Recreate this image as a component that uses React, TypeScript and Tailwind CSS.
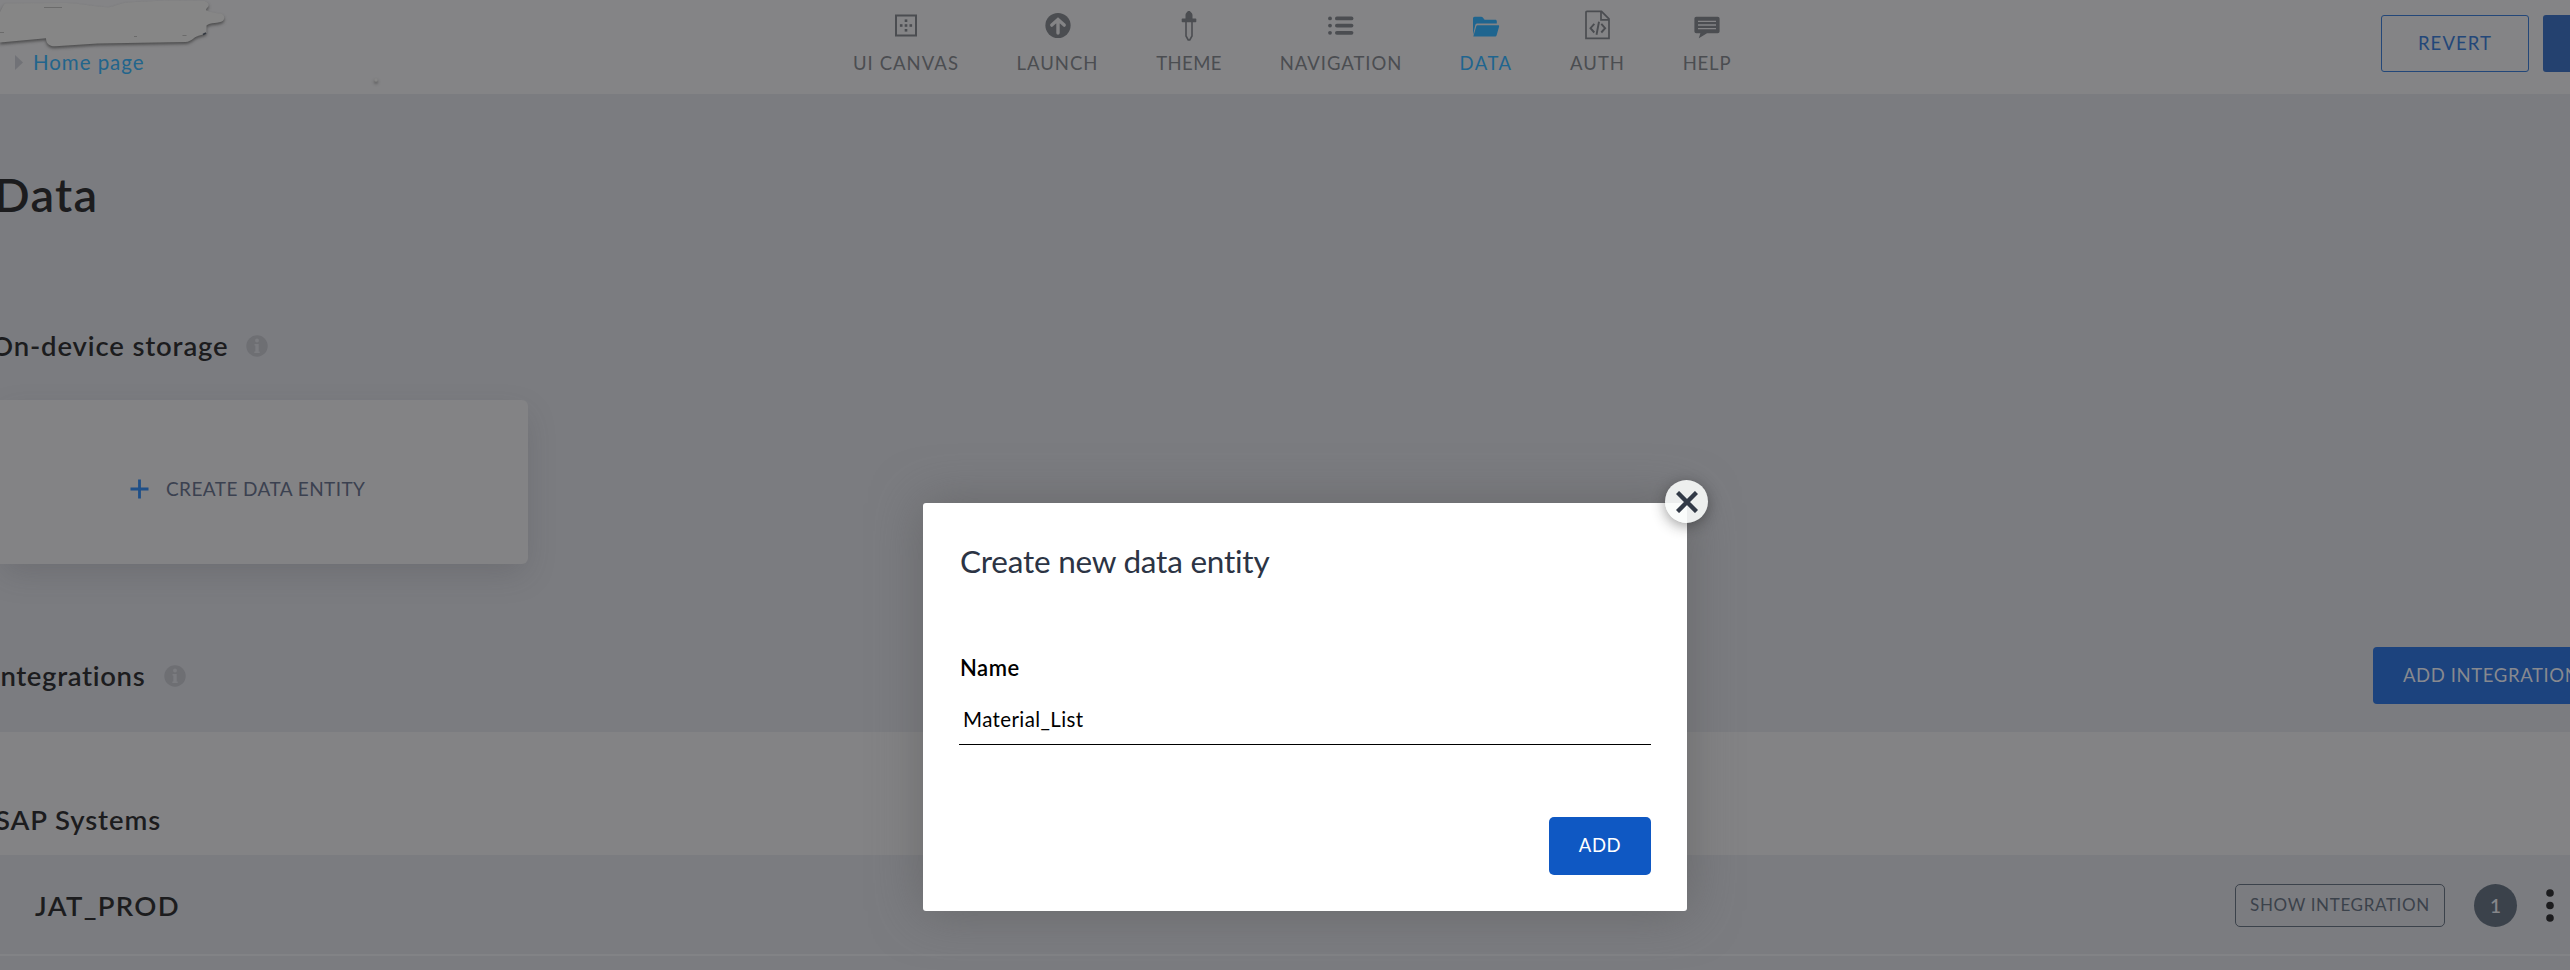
import React from "react";

type NavItem = { label: string; width: string; color: string; track: string; icon: React.ReactNode };

const gray = "text-[#4b4d51]";

const CanvasIcon = () => (
  <svg width="24" height="32" viewBox="0 0 24 32" fill="none">
    <rect x="2" y="6.500" width="20" height="20" stroke="currentColor" strokeWidth="2" />
    <g fill="currentColor">
      <rect x="10.700" y="10.400" width="2.600" height="2.600" />
      <rect x="10.700" y="15.200" width="2.600" height="2.600" />
      <rect x="10.700" y="20" width="2.600" height="2.600" />
      <rect x="5.900" y="15.200" width="2.600" height="2.600" />
      <rect x="15.500" y="15.200" width="2.600" height="2.600" />
    </g>
  </svg>
);

const LaunchIcon = () => (
  <svg width="28" height="32" viewBox="0 0 28 32" fill="none">
    <circle cx="14" cy="16.500" r="12.600" fill="currentColor" />
    <path d="M14 24V12M7.800 16.100L14 10.500l6.200 5.600" stroke="#848486" strokeWidth="3.400" strokeLinecap="round" />
  </svg>
);

const ThemeIcon = () => (
  <svg width="16" height="32" viewBox="0 0 16 32" fill="none">
    <path d="M4.500 10V6c0-2 1.600-2.600 2.400-4h2c.8 1.400 2.600 2 2.600 4v4z" fill="currentColor" />
    <rect x="0.700" y="9.600" width="14.600" height="3.600" rx="0.800" fill="currentColor" />
    <path d="M5 13v14l2.200 4h1.600L11 27V13" stroke="currentColor" strokeWidth="1.600" />
  </svg>
);

const NavigationIcon = () => (
  <svg width="28" height="32" viewBox="0 0 28 32" fill="currentColor">
    {[9.4, 16.6, 23.8].map((y) => (
      <g key={y}>
        <circle cx="3" cy={y} r="1.900" />
        <rect x="8" y={y - 1.9} width="18.400" height="3.800" rx="1.900" />
      </g>
    ))}
  </svg>
);

const FolderIcon = () => (
  <svg width="28" height="32" viewBox="0 0 28 32" fill="currentColor">
    <path d="M1 26V9.500C1 8.400 1.700 7.700 2.800 7.700h6.400c.6 0 1 .2 1.400.6l2 2.400h10.600c1 0 1.600.6 1.600 1.500v2.300H5.400c-1.100 0-1.800.5-2.100 1.500z" />
    <path d="M5.600 16.300h20.500c.8 0 1.200.5 1 1.200l-2.400 8.400c-.3 1-.9 1.500-1.900 1.500H1.300l3-10.100c.2-.7.600-1 1.300-1z" />
  </svg>
);

const AuthIcon = () => (
  <svg width="28" height="32" viewBox="0 0 28 32" fill="none" stroke="currentColor" strokeWidth="1.700">
    <path d="M3 2.300h14.500l7.500 7.500v19.500H2V3.300c0-.6.4-1 1-1z" />
    <path d="M17 2.800v8h8" />
    <path d="M10.300 14.900L6.500 19.200l3.800 4.300M17.300 14.900l3.800 4.300-3.800 4.300M15 12.700l-2.500 13" strokeWidth="1.900" />
  </svg>
);

const HelpIcon = () => (
  <svg width="28" height="32" viewBox="0 0 28 32" fill="none">
    <path d="M3.400 7.700h21.200c1.200 0 2 .8 2 2v12.500c0 1.200-.8 2-2 2H14l-8.200 5 1.600-5h-4c-1.200 0-2-.8-2-2V9.700c0-1.200.8-2 2-2z" fill="currentColor" />
    <path d="M5 12.300h18M5 16h18M5 19.700h18" stroke="#848486" strokeWidth="1.300" />
  </svg>
);

const items: NavItem[] = [
  { label: "UI CANVAS", width: "w-[164px]", color: gray, track: "tracking-[1.050px]", icon: <CanvasIcon /> },
  { label: "LAUNCH", width: "w-[139px]", color: gray, track: "tracking-[1px]", icon: <LaunchIcon /> },
  { label: "THEME", width: "w-[124px]", color: gray, track: "tracking-[0.400px]", icon: <ThemeIcon /> },
  { label: "NAVIGATION", width: "w-[180px]", color: gray, track: "tracking-[0.950px]", icon: <NavigationIcon /> },
  { label: "DATA", width: "w-[110px]", color: "text-[#1f658f]", track: "tracking-[1.500px]", icon: <FolderIcon /> },
  { label: "AUTH", width: "w-[113px]", color: gray, track: "tracking-[1px]", icon: <AuthIcon /> },
  { label: "HELP", width: "w-[106px]", color: gray, track: "tracking-[0.800px]", icon: <HelpIcon /> },
];

const InfoIcon = () => (
  <svg width="22" height="22" viewBox="0 0 22 22" className="shrink-0">
    <circle cx="11" cy="11" r="10.700" fill="#6e6f73" />
    <g fill="#7b7c80">
      <circle cx="11" cy="5.400" r="2" />
      <path d="M8.500 9h4.200v7.500h1V18H8.300v-1.500h1v-6h-.8z" />
    </g>
  </svg>
);

const Scribble = () => (
  <svg width="400" height="90" viewBox="0 0 400 90" className="absolute left-0 top-0">
    <g fill="#868686" className="drop-shadow-[0_2px_1.500px_rgba(40,40,40,0.6)]">
      <path d="M0 12C3 7 3 3.500 7 3.200L66 3c14 .5 31 4 42 4.300 7-.8 9-3 18-4.800L165 .5l38 .3c5 .6 7 4 5 6-1 1.500-2 2-2 3.500 4 2 10 3 15 3.400 4 1 4 5 2 7-4 3-13 1.500-16.500 4.800V33c-3 2-9 2-13 5.500-2 1.500-5 3.500-8 3.500l-88 1.500-42 2.700c-6 .3-9.500-2.500-9.500-8L0 42.500z" />
      <circle cx="376" cy="80" r="1.700" />
    </g>
    <path d="M44 7.500h18M182.500 35.500h4M134 36.500h3M0 32.500h4" stroke="#6b6b6b" strokeWidth="1" />
    <path d="M203 34.500l3-1.500" stroke="#333840" strokeWidth="1.500" />
  </svg>
);

export default function App() {
  return (
    <div className="relative flex h-[970px] w-[2570px] flex-col overflow-hidden bg-[#7b7c80] font-['Lato',sans-serif] leading-none whitespace-nowrap">
      <header className="relative flex h-[94px] shrink-0 items-start bg-[#848486]">
        <div className="w-[824px] shrink-0">
          <Scribble />
          <div className="flex items-center pl-[15px] pt-[50px]">
            <svg width="8" height="15" viewBox="0 0 8 15"><path d="M0 0l8 7.500L0 15z" fill="#717277" /></svg>
            <span className="ml-[10px] text-[20.500px] leading-6 tracking-[0.950px] text-[#22658c]">Home page</span>
          </div>
        </div>
        <nav className="flex">
          {items.map((it) => (
            <div key={it.label} className={`flex flex-col items-center pt-[9px] ${it.width} ${it.color}`}>
              {it.icon}
              <span className={`mt-[11px] text-[18.500px] leading-[22px] ${it.track}`}>{it.label}</span>
            </div>
          ))}
        </nav>
        <div className="ml-auto flex gap-[14px] pt-[15px]">
          <button className="h-[57px] w-[148px] rounded-[3px] border border-[#234779] pb-px text-[18.500px] tracking-[1.100px] text-[#234779]">REVERT</button>
          <div className="h-[57px] w-[27px] rounded-l-[3px] bg-[#24416f]" />
        </div>
      </header>

      <section className="flex h-[638px] shrink-0 flex-col">
        <h1 className="-ml-[6px] mt-[70px] text-[47px] font-semibold leading-[60px] tracking-[1.300px] text-[#1c1c1e]">Data</h1>
        <div className="mt-[105px] flex h-[34px] items-center">
          <h2 className="-ml-[9px] w-[255px] text-[27.500px] font-semibold tracking-[0.850px] text-[#1c1c1e]">On-device storage</h2>
          <InfoIcon />
        </div>
        <div className="mt-[37px] flex h-[164px] w-[528px] shrink-0 items-center rounded-r-[6px] bg-[#838385] pl-[130px] pt-[13px] shadow-[0_12px_32px_-4px_rgba(60,60,64,0.22)]">
          <svg width="19" height="20" viewBox="0 0 19 20"><path d="M9.500 .5v19M.5 10h18" stroke="#1e4f88" strokeWidth="2.800" /></svg>
          <span className="ml-[17px] text-[19px] tracking-[0.420px] text-[#3b4150]">CREATE DATA ENTITY</span>
        </div>
        <div className="mt-[83px] flex h-[57px] items-center">
          <h2 className="-ml-[8px] w-[172px] text-[27.500px] font-semibold tracking-[0.650px] text-[#1c1c1e]">Integrations</h2>
          <InfoIcon />
          <button className="ml-auto flex h-[57px] w-[197px] items-center overflow-hidden rounded-l-[4px] bg-[#1c437e] pb-px pl-[30px] text-[18.500px] tracking-[0.600px] text-[#87898f]">ADD INTEGRATION</button>
        </div>
      </section>

      <section className="h-[123px] shrink-0 bg-[#838385] pt-[71px]">
        <h2 className="-ml-[5px] text-[27.500px] font-semibold leading-[33px] tracking-[0.900px] text-[#1c1c1e]">SAP Systems</h2>
      </section>

      <section className="flex h-[101px] shrink-0 items-center border-b-2 border-[#828386] pl-[35px] pt-[2px]">
        <h3 className="text-[27.500px] font-semibold tracking-[1.300px] text-[#1c1c1e]">JAT_PROD</h3>
        <button className="ml-auto flex h-[43px] w-[210px] items-center justify-center rounded-[5px] border border-[#3b424b] pb-[3px] text-[17px] tracking-[0.650px] text-[#3b424b]">SHOW INTEGRATION</button>
        <div className="ml-[29px] flex size-[43px] items-center justify-center rounded-full bg-[#3b424b] text-[19px] font-semibold text-[#85868a]">1</div>
        <svg width="8" height="33" viewBox="0 0 8 33" className="ml-[29px] mr-[16px]" fill="#1c1c1e">
          <circle cx="4" cy="4" r="3.800" /><circle cx="4" cy="16.500" r="3.800" /><circle cx="4" cy="29" r="3.800" />
        </svg>
      </section>

      <div role="dialog" className="absolute left-[923px] top-[503px] flex h-[408px] w-[764px] flex-col rounded-[3px] bg-white px-[36px] pb-[36px] shadow-[0_0_50px_rgba(90,90,90,0.6)]">
        <h2 className="mt-[39px] pl-px text-[31.500px] leading-[38px] tracking-[-0.230px] text-[#2c3444]">Create new data entity</h2>
        <label className="mt-[75px] pl-px text-[22px] font-semibold leading-[26px] tracking-[0.500px] text-black">Name</label>
        <div className="mt-[25px] h-[39px] border-b border-black pl-[4px] text-[20.500px] leading-[26px] tracking-[0.400px] text-black">Material_List</div>
        <button className="mt-auto h-[58px] w-[102px] self-end rounded-[5px] bg-[#0f58c3] pb-px text-[18.500px] tracking-[0.600px] text-white">ADD</button>
        <button className="absolute -right-[21px] -top-[23px] flex size-[43px] items-center justify-center rounded-full bg-[#fafcfb]/90 shadow-[0_3px_14px_rgba(30,30,30,0.450)]">
          <svg width="22" height="22" viewBox="0 0 22 22"><path d="M1.500 1.500l19 19M20.500 1.500l-19 19" stroke="#323a47" strokeWidth="4.400" /></svg>
        </button>
      </div>
    </div>
  );
}
